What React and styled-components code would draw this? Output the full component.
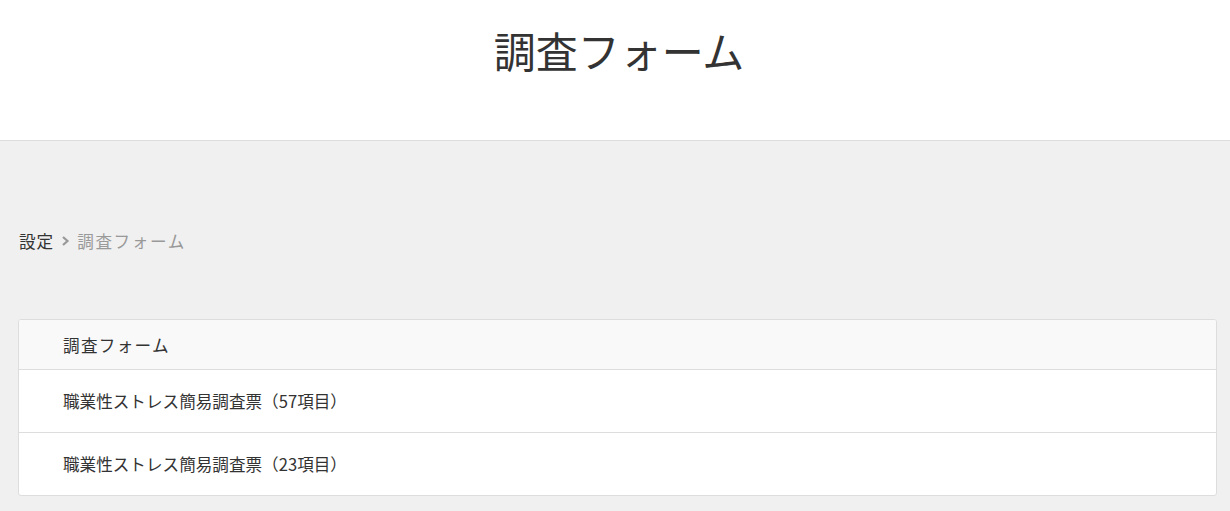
import React from 'react';
import styled, { createGlobalStyle } from 'styled-components';

const GlobalStyle = createGlobalStyle`
  html, body {
    margin: 0;
    padding: 0;
    background: #f0f0f0;
    font-family: "Noto Sans CJK JP", "Noto Sans", sans-serif;
    color: #333;
  }
`;

const forms = [
  { id: 57, name: '職業性ストレス簡易調査票（57項目）' },
  { id: 23, name: '職業性ストレス簡易調査票（23項目）' },
];

const App = () => {
  return (
    <>
      <GlobalStyle />
      <Header>
        <Title>調査フォーム</Title>
      </Header>
      <Main>
        <Breadcrumb>
          <Crumb>設定</Crumb>
          <Chevron viewBox="0 0 8 10" aria-hidden="true">
            <path d="M1.5 1l4.5 4-4.5 4" fill="none" stroke="#999" strokeWidth="2.2" />
          </Chevron>
          <Crumb current>調査フォーム</Crumb>
        </Breadcrumb>
        <Table>
          <HeadRow>調査フォーム</HeadRow>
          {forms.map(form => (
            <Row key={form.id}>{form.name}</Row>
          ))}
        </Table>
      </Main>
    </>
  );
};

export default App;

const Header = styled.header`
  height: 141px;
  background: #fff;
  border-bottom: 1px solid #ddd;
  display: flex;
  justify-content: center;
  align-items: flex-start;
  padding-left: 8px;
  box-sizing: border-box;
`;

const Title = styled.h1`
  margin: 22px 0 0;
  font-size: 42px;
  font-weight: 400;
  line-height: 56px;
  color: #333;
`;

const Main = styled.main`
  padding: 76px 13px 16px 18px;
`;

const Breadcrumb = styled.nav`
  display: flex;
  align-items: center;
  gap: 7px;
  height: 48px;
  font-size: 16.6px;
  padding-left: 1px;
`;

const Crumb = styled.span`
  color: ${p => (p.current ? '#999' : '#333')};
  letter-spacing: ${p => (p.current ? '1.6px' : '1px')};
`;

const Chevron = styled.svg`
  width: 9px;
  height: 10px;
`;

const Table = styled.div`
  margin-top: 54px;
  background: #fff;
  border: 1px solid #ddd;
  border-radius: 3px;
  overflow: hidden;
`;

const HeadRow = styled.div`
  height: 49px;
  display: flex;
  align-items: center;
  padding-left: 44px;
  background: #f9f9f9;
  font-size: 16.6px;
  letter-spacing: 1.3px;
  border-bottom: 1px solid #ddd;
`;

const Row = styled.div`
  height: 62px;
  display: flex;
  align-items: center;
  padding-left: 44px;
  font-size: 16.6px;
  border-bottom: 1px solid #ddd;

  &:last-child {
    border-bottom: none;
  }
`;
